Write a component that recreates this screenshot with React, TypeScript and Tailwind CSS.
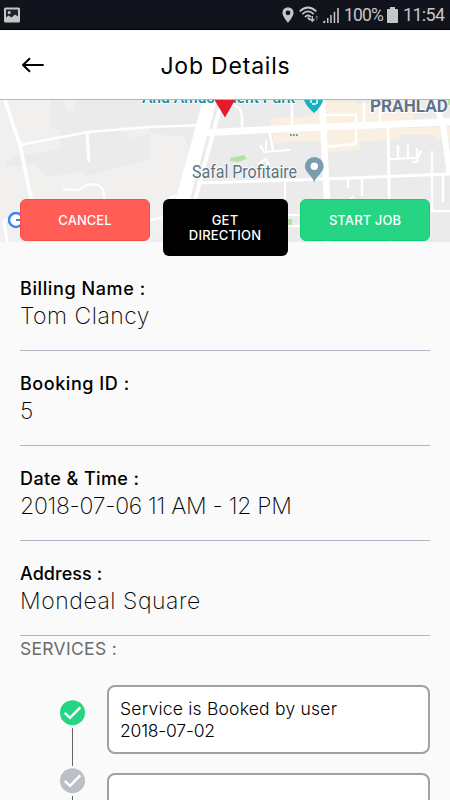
import { clsx } from 'clsx';

const DETAILS = [
  { label: 'Billing Name :', value: 'Tom Clancy', labelClass: 'tracking-[0.6px]', valueClass: 'tracking-[0.5px]' },
  { label: 'Booking ID :', value: '5', labelClass: 'tracking-[0.55px]', valueClass: '' },
  { label: 'Date & Time :', value: '2018-07-06 11 AM - 12 PM', labelClass: 'tracking-[0.4px]', valueClass: 'tracking-[-0.28px]' },
  { label: 'Address :', value: 'Mondeal Square', labelClass: 'tracking-[0.05px]', valueClass: 'tracking-[0.55px]' },
];

export default function App() {
  return (
    <div className="flex flex-col w-[450px] h-[800px] overflow-hidden bg-[#fafafa] font-['Inter',sans-serif] text-black">
      <StatusBar />

      <header className="grid grid-cols-[1fr_auto_1fr] items-center h-[69px] shrink-0 pl-[21px] bg-white">
        <button aria-label="Back" className="w-6 h-[18px]">
          <svg viewBox="0 0 24 18" className="w-6 h-[18px]" fill="none" stroke="black" strokeWidth="2">
            <path d="M22.7 9H2M9 2.2L2 9l7 6.8" strokeLinejoin="round" />
          </svg>
        </button>
        <h1 className="relative -left-[10px] top-[1px] text-[23px] leading-7 tracking-[0.8px] whitespace-nowrap">Job Details</h1>
      </header>

      <div className="grid h-[143px] shrink-0">
        <div className="[grid-area:1/1] h-[143px] border-t border-[#aeb6bf]">
          <JobMap />
        </div>
        <div className="relative [grid-area:1/1] flex items-start justify-between px-5 pt-[100px] text-[13px] leading-[15px] font-[450] text-white text-center">
          <button className="w-[130px] h-[42px] rounded-[6px] bg-[#ff5d55] border border-[#fa4f49] tracking-[0.05px]">CANCEL</button>
          <button className="w-[125px] h-[57px] shrink-0 rounded-[6px] bg-black tracking-[0.2px]">
            GET
            <br />
            DIRECTION
          </button>
          <button className="w-[130px] h-[42px] rounded-[6px] bg-[#25d584] border border-[#0ad078] tracking-[0.1px]">START JOB</button>
        </div>
      </div>

      <main className="flex flex-col px-5 pt-[14px]">
        {DETAILS.map((item) => (
          <div key={item.label} className="h-[95px] shrink-0 pt-[22px] border-b border-[#aeb6c4]">
            <div className={clsx('text-[18px] leading-[22px] font-medium', item.labelClass)}>{item.label}</div>
            <div className={clsx('pt-[2px] text-[23px] leading-[28px] font-extralight', item.valueClass)}>{item.value}</div>
          </div>
        ))}

        <h2 className="pt-[2px] text-[17.5px] leading-[22px] text-[#6b6b6b] tracking-[0.3px]">SERVICES :</h2>

        <div className="flex pt-[25px]">
          <div className="flex flex-col items-center w-[25px] ml-10 mr-[22px] pt-[15px]">
            <StepIcon done />
            <div className="w-px h-[38px] my-[2px] bg-[#666]" />
            <StepIcon />
            <div className="w-px h-[38px] mt-[2px] bg-[#666]" />
          </div>
          <div className="flex flex-col flex-1 gap-[19px]">
            <div className="h-[69px] pt-[11px] pl-[11px] border-2 border-[#a1a1a1] rounded-[8px] bg-white text-[17.5px] leading-[22px] font-light">
              <div className="tracking-[0.22px]">Service is Booked by user</div>
              <div className="tracking-[-0.2px]">2018-07-02</div>
            </div>
            <div className="h-[69px] border-2 border-[#a1a1a1] rounded-[8px] bg-white" />
          </div>
        </div>
      </main>
    </div>
  );
}

function StatusBar() {
  return (
    <div className="flex items-center justify-between h-[30px] shrink-0 pl-1 pr-[6px] bg-[#11131d] border-b border-black font-['Roboto',sans-serif] text-[#c6c6c6]">
      <svg viewBox="0 0 16 16" className="w-4 h-4">
        <rect width="16" height="15" y="0.5" rx="1.5" fill="#c6c6c6" />
        <path d="M2 2.5h12v7l-3-2-3.5 3-3-2L2 10.5z" fill="#20222b" />
        <circle cx="5.2" cy="5.5" r="1.5" fill="#c6c6c6" />
      </svg>
      <div className="flex items-center">
        <svg viewBox="0 0 12 16" className="w-3 h-4 mr-[5px]">
          <path d="M6 0.2A5.6 5.6 0 0 0 .4 5.8C.4 9.5 6 15.8 6 15.8s5.6-6.3 5.6-10A5.6 5.6 0 0 0 6 .2zm0 3.2a2.4 2.4 0 1 1 0 4.8 2.4 2.4 0 0 1 0-4.8z" fill="currentColor" fillRule="evenodd" />
        </svg>
        <svg viewBox="0 0 20 17" className="w-5 h-[17px] mr-[4px]" fill="none" stroke="currentColor" strokeWidth="1.7">
          <path d="M.7 5.4q8.3-7.8 16.6 0M3.3 8.2q5.7-5.5 11.4 0M5.9 11q3.1-3 6.2 0" />
          <path d="M9 11.5L11 14" strokeWidth="2" />
          <path d="M13.3 10v5M11.3 13l2 2.3 2-2.3" strokeWidth="1.3" />
          <path d="M17.8 14.5V10M16.4 11.5l1.4-1.7 1.4 1.7" strokeWidth="1" stroke="#696b72" />
        </svg>
        <svg viewBox="0 0 16 15" className="w-4 h-[15px] mr-[5px] mt-[1px]" fill="currentColor">
          <path d="M0 15v-1l2.2-2V15zM4 10h1.5v5H4zM7.2 7h1.5v8H7.2zM10.7 3.8h1.5V15h-1.5zM14.2 0h1.6v15h-1.6z" />
        </svg>
        <span className="w-[43px] text-[17.5px] leading-5 tracking-[-0.85px] mt-[1px]">100%</span>
        <svg viewBox="0 0 11 16" className="w-[11px] h-4 mr-[5px]">
          <path d="M3 0h5v2h2.2q.8 0 .8.8v12.4q0 .8-.8.8H.8q-.8 0-.8-.8V2.8Q0 2 .8 2H3z" fill="currentColor" />
        </svg>
        <span className="w-[41px] text-[18px] leading-5 tracking-[-0.7px] mt-[1px]">11:54</span>
      </div>
    </div>
  );
}

function StepIcon({ done = false }: { done?: boolean }) {
  return (
    <svg viewBox="0 0 25 26" className="w-[25px] h-[26px] shrink-0">
      <circle cx="12.5" cy="12.7" r="12.5" fill={done ? '#25d584' : '#bbc0c6'} />
      <path d="M4.7 12.8l5.3 5L20.3 7.3" fill="none" stroke="white" strokeWidth="2.5" />
    </svg>
  );
}

function JobMap() {
  return (
    <svg viewBox="0 100 450 142" className="block w-[450px] h-[142px] font-['Roboto',sans-serif]">
      <rect y="100" width="450" height="142" fill="#ebebeb" />
      <path d="M0 100H50V129H60V150L20 155 5 162V167L35 165 46 177 83 172V177L150 160V134L185 137 190 155 177 198 150 222V242H0z" fill="#f1f0ef" />
      <path d="M63 100H75V110L66 111zM117 127L133 139 150 133V126z" fill="#f1f0ef" />
      <path d="M150 204L178 198 168 236 150 241z" fill="#f1f0ef" />

      {/* commercial areas */}
      <path d="M270 118L300 117 322 113V102H355L357 104H378V113L414 111V119L450 117V122L330 127 270 129z" fill="#f9f0e1" />
      <path d="M273 132L325 130 450 127V139L436 138 434 135H400L398 139 388 140 360 142V150L328 152V142L300 141 273 143z" fill="#f9f0e1" />
      <path d="M230 158l14-3 3 4-9 3-8-1zM287 219h5v6h-5zM448 100h2v5h-2z" fill="#b5e2a2" />

      {/* streets */}
      <g fill="none" stroke="white" strokeWidth="3">
        <path d="M5 100Q12 122 20 145L28 184 32 202" strokeWidth="3.6" />
        <path d="M20 145L88 132 150 127 205 125" strokeWidth="2.6" />
        <path d="M87 133L89 162" />
        <path d="M63 189L79 190 88 184 98 185 103 189 105 202" strokeWidth="2" />
        <path d="M7 242L4 221 10 218" />
        <path d="M220 108L195 200" strokeWidth="4" />
        <path d="M197 183L300 180 450 174" />
        <path d="M224 106Q241 102 242 117V130M269 130L273 150M292 103V127" strokeWidth="2.5" />
        <path d="M260 145L264 152 290 150M266 140V150M258 164l8-5 3 7M285 180V242" strokeWidth="2" />
        <path d="M200 133L300 128 450 122" strokeWidth="7" />
        <path d="M322 100L327 200V242" strokeWidth="6.5" />
        <path d="M325 115H356V144L325 147M364 102V124M380 102V124" strokeWidth="2.5" />
        <path d="M388 124L390 242" />
        <path d="M390 159L418 158 421 150M398 145V158M408 145V158M417 148V162H412" strokeWidth="2.2" />
        <path d="M434 100L443 125 450 175" strokeWidth="6" />
        <path d="M432 151V211H450M443 175V202M348 179V188M362 178V196" strokeWidth="2.5" />
        <path d="M349 200l5-4M280 215H300M285 226H300" strokeWidth="2" />
        <path d="M150 220L165 217M169 198l10-3" strokeWidth="2" />
      </g>
      <path d="M203 100H217L190 199 180 242H165L176 198z" fill="white" />

      <circle cx="16" cy="220" r="7" fill="white" stroke="#4285f4" strokeWidth="2.5" />
      <path d="M16 220h6" stroke="#4285f4" strokeWidth="2" />

      {/* places */}
      <text x="142" y="102.8" fontSize="17" fontWeight="500" fill="#168b94" stroke="white" strokeWidth="1.5" paintOrder="stroke" textLength="153" lengthAdjust="spacingAndGlyphs">And Amusement Park</text>
      <path d="M214.5 100H235L225 117.5z" fill="#e31b2d" />
      <path d="M304 100H323Q322 106 314 113 306 106 304 100z" fill="#17b1c5" />
      <path d="M311 100v3M317 100v4M312 104h4" stroke="white" strokeWidth="1.5" />
      <path d="M290 135h1.7M293 135h1.7M296 135h1.7" stroke="#168b94" strokeWidth="1.4" />
      <text x="192" y="178" fontSize="18" fill="#5a7184" stroke="white" strokeWidth="1.5" paintOrder="stroke" textLength="105" lengthAdjust="spacingAndGlyphs">Safal Profitaire</text>
      <path d="M314.3 157a9.4 9.4 0 0 0-9.4 9.4c0 6 7.4 9 9.4 16 2-7 9.4-10 9.4-16a9.4 9.4 0 0 0-9.4-9.4z" fill="#7b9dad" />
      <circle cx="314.3" cy="166.3" r="3.7" fill="white" />
      <text x="370" y="112" fontSize="17.5" fontWeight="700" fill="#627386" stroke="white" strokeWidth="2" paintOrder="stroke" textLength="78" lengthAdjust="spacingAndGlyphs">PRAHLAD</text>
    </svg>
  );
}
